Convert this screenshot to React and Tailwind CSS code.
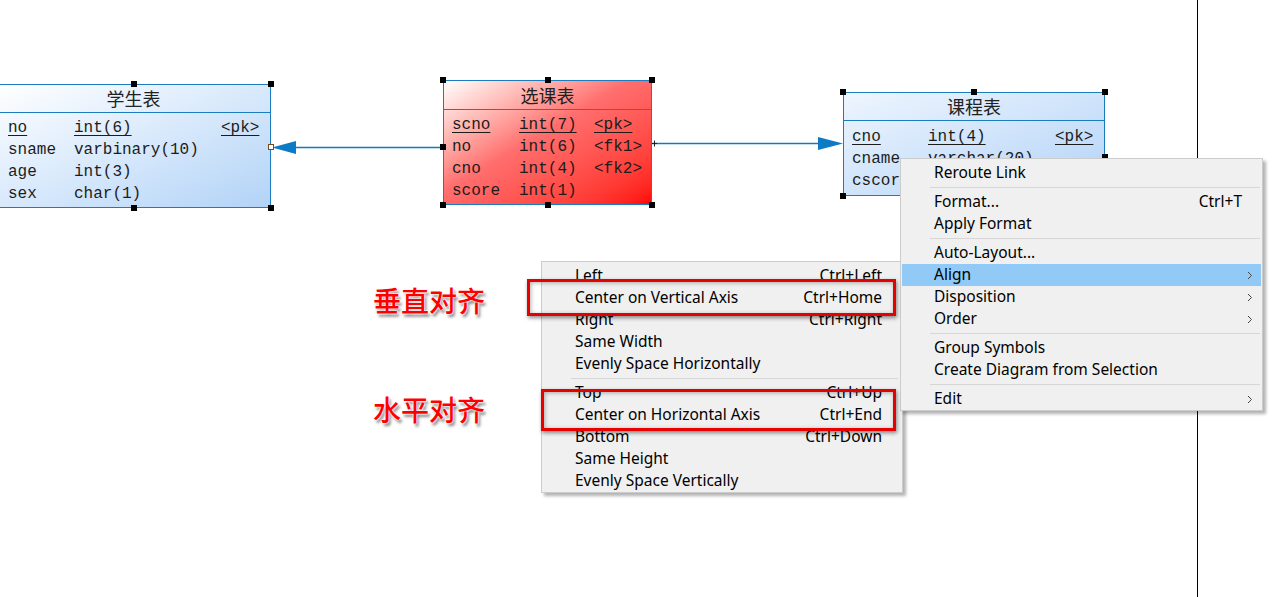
import React from "react";

const MONO = "font-['Liberation_Mono','DejaVu_Sans_Mono',monospace]";
const UI = "font-['Noto_Sans','Noto_Sans_CJK_SC',sans-serif]";

// small black selection handle centred on a border point
function Handle({ pos, hollow }) {
  return (
    <div
      className={`absolute size-[6px] ${pos} ${
        hollow ? "border border-[#7a4a1a] bg-white" : "bg-black"
      }`}
    />
  );
}

function Row({ cells, pk, nameW, typeW }) {
  const u = pk ? "underline underline-offset-[3px] decoration-1" : "";
  return (
    <div className="flex h-[22px] items-center whitespace-nowrap">
      <span className={nameW}>
        <span className={u}>{cells[0]}</span>
      </span>
      <span className={typeW}>
        <span className={u}>{cells[1]}</span>
      </span>
      {cells[2] && <span className={u}>{cells[2]}</span>}
    </div>
  );
}

function Table({ title, rows, pos, bg, headH, bodyCls, nameW, typeW, handles }) {
  return (
    <div className={`absolute border border-[#1b7dc0] ${pos} ${bg}`}>
      <div
        className={`${headH} flex items-center justify-center border-b border-[#1b7dc0] font-['Noto_Sans_CJK_SC',sans-serif] text-[18px] text-[#222]`}
      >
        {title}
      </div>
      <div className={`${bodyCls} ${MONO} text-[16px] text-[#1c1c1c]`}>
        {rows.map((r, i) => (
          <Row key={i} cells={r} pk={i === 0} nameW={nameW} typeW={typeW} />
        ))}
      </div>
      {handles}
    </div>
  );
}

function Chevron() {
  return (
    <svg width="6" height="9" viewBox="0 0 6 9" className="block">
      <polyline points="1,1 4.5,4.5 1,8" fill="none" stroke="#444" strokeWidth="1" />
    </svg>
  );
}

function Item({ label, shortcut, sub, active }) {
  return (
    <div
      className={`flex h-[22px] items-center pl-[32px] pr-[8px] ${
        active ? "bg-[#91c9f7]" : ""
      }`}
    >
      <span className="flex-1 whitespace-nowrap">{label}</span>
      {shortcut && <span className="whitespace-nowrap">{shortcut}</span>}
      <span className="flex w-[11px] justify-end">{sub && <Chevron />}</span>
    </div>
  );
}

function Sep({ mr }) {
  return (
    <div className={`flex h-[7px] items-center ml-[28px] ${mr}`}>
      <div className="h-px w-full bg-[#d6d6d6]" />
    </div>
  );
}

const labelCls =
  "absolute font-['Noto_Sans_CJK_SC',sans-serif] text-[28px] font-medium leading-[28px] text-[#ff0000] [text-shadow:0_0_2px_#fff,0_0_2px_#fff,0_0_1px_#fff,2px_3px_3px_rgba(0,0,0,0.5)]";

export default function App() {
  return (
    <div className="relative h-[597px] w-[1284px] overflow-hidden bg-white">
      {/* page edge */}
      <div className="absolute left-[1197px] top-0 h-full w-px bg-black" />

      {/* links */}
      <svg className="pointer-events-none absolute left-0 top-0" width="1284" height="597">
        <line x1="292" y1="147.5" x2="443" y2="147.5" stroke="#0a7bc4" strokeWidth="1.6" />
        <polygon points="272,147.5 296,141 296,154" fill="#0a7bc4" />
        <line x1="651" y1="143.5" x2="822" y2="143.5" stroke="#0a7bc4" strokeWidth="1.6" />
        <polygon points="843,143.5 818,137 818,150" fill="#0a7bc4" />
        <path d="M651.5 140v7 M654.5 140.5v6 M652 143.5h5" stroke="#222" strokeWidth="1" />
        <rect x="647" y="140" width="2" height="7" fill="#13c3c3" />
      </svg>

      <Table
        title="学生表"
        pos="left-[-4px] top-[84px] w-[275px]"
        bg="bg-linear-to-br from-white to-[#b2d3f7]"
        headH="h-[28px]"
        bodyCls="pl-[11px] pt-[4px] pb-[2px]"
        nameW="w-[66px]"
        typeW="w-[147px]"
        rows={[
          ["no", "int(6)", "<pk>"],
          ["sname", "varbinary(10)"],
          ["age", "int(3)"],
          ["sex", "char(1)"],
        ]}
        handles={
          <>
            <Handle pos="left-[-3px] top-[59px]" />
            <Handle pos="left-[134px] top-[-4px]" />
            <Handle pos="right-[-4px] top-[-4px]" />
            <Handle pos="right-[-4px] top-[59px]" hollow />
            <Handle pos="left-[134px] bottom-[-4px]" />
            <Handle pos="right-[-4px] bottom-[-4px]" />
          </>
        }
      />

      <Table
        title="选课表"
        pos="left-[443px] top-[80px] w-[209px]"
        bg="bg-linear-to-br from-white via-[#ff6e6e] via-45% to-[#ff0000]"
        headH="h-[29px]"
        bodyCls="pl-[8px] pt-[4px] pb-[2px]"
        nameW="w-[67px]"
        typeW="w-[75px]"
        rows={[
          ["scno", "int(7)", "<pk>"],
          ["no", "int(6)", "<fk1>"],
          ["cno", "int(4)", "<fk2>"],
          ["score", "int(1)"],
        ]}
        handles={
          <>
            <Handle pos="left-[-4px] top-[-4px]" />
            <Handle pos="left-[101px] top-[-4px]" />
            <Handle pos="right-[-4px] top-[-4px]" />
            <Handle pos="left-[-4px] top-[63px]" />
            <Handle pos="left-[-4px] bottom-[-4px]" />
            <Handle pos="left-[101px] bottom-[-4px]" />
            <Handle pos="right-[-4px] bottom-[-4px]" />
          </>
        }
      />

      <Table
        title="课程表"
        pos="left-[843px] top-[92px] w-[262px]"
        bg="bg-linear-to-br from-[#eef5fe] to-[#b2d3f7]"
        headH="h-[28px]"
        bodyCls="pl-[8px] pt-[5px] pb-[3px]"
        nameW="w-[76px]"
        typeW="w-[127px]"
        rows={[
          ["cno", "int(4)", "<pk>"],
          ["cname", "varchar(20)"],
          ["cscore", "int(2)"],
        ]}
        handles={
          <>
            <Handle pos="left-[-4px] top-[-4px]" />
            <Handle pos="left-[127px] top-[-4px]" />
            <Handle pos="right-[-4px] top-[-4px]" />
            <Handle pos="right-[-4px] top-[61px]" />
            <Handle pos="left-[-4px] bottom-[-4px]" />
          </>
        }
      />

      {/* Align submenu */}
      <div
        className={`absolute left-[541px] top-[261px] w-[362px] border border-[#cccccc] bg-[#f0f0f0] px-px pt-[3px] text-[15.5px] text-black shadow-[3px_3px_3px_rgba(0,0,0,0.3)] ${UI}`}
      >
        <Item label="Left" shortcut="Ctrl+Left" />
        <Item label="Center on Vertical Axis" shortcut="Ctrl+Home" />
        <Item label="Right" shortcut="Ctrl+Right" />
        <Item label="Same Width" />
        <Item label="Evenly Space Horizontally" />
        <Sep mr="mr-[3px]" />
        <Item label="Top" shortcut="Ctrl+Up" />
        <Item label="Center on Horizontal Axis" shortcut="Ctrl+End" />
        <Item label="Bottom" shortcut="Ctrl+Down" />
        <Item label="Same Height" />
        <Item label="Evenly Space Vertically" />
      </div>

      {/* main context menu */}
      <div
        className={`absolute left-[900px] top-[158px] w-[363px] border border-[#cccccc] bg-[#f0f0f0] px-px pt-[3px] text-[15.5px] text-black shadow-[3px_3px_3px_rgba(0,0,0,0.3)] ${UI}`}
      >
        <Item label="Reroute Link" />
        <Sep mr="mr-px" />
        <Item label="Format..." shortcut="Ctrl+T" />
        <Item label="Apply Format" />
        <Sep mr="mr-px" />
        <Item label="Auto-Layout..." />
        <Item label="Align" sub active />
        <Item label="Disposition" sub />
        <Item label="Order" sub />
        <Sep mr="mr-px" />
        <Item label="Group Symbols" />
        <Item label="Create Diagram from Selection" />
        <Sep mr="mr-px" />
        <Item label="Edit" sub />
      </div>

      {/* annotation frames */}
      <div className="absolute left-[527px] top-[279px] h-[37px] w-[369px] border-[3px] border-[#e60000] shadow-[1px_2px_4px_rgba(0,0,0,0.45),inset_1px_1px_4px_rgba(0,0,0,0.3)]" />
      <div className="absolute left-[541px] top-[389px] h-[42px] w-[355px] border-[3px] border-[#e60000] shadow-[1px_2px_4px_rgba(0,0,0,0.45),inset_1px_1px_4px_rgba(0,0,0,0.3)]" />

      <div className={`${labelCls} left-[373px] top-[286px]`}>垂直对齐</div>
      <div className={`${labelCls} left-[373px] top-[395px]`}>水平对齐</div>
    </div>
  );
}
